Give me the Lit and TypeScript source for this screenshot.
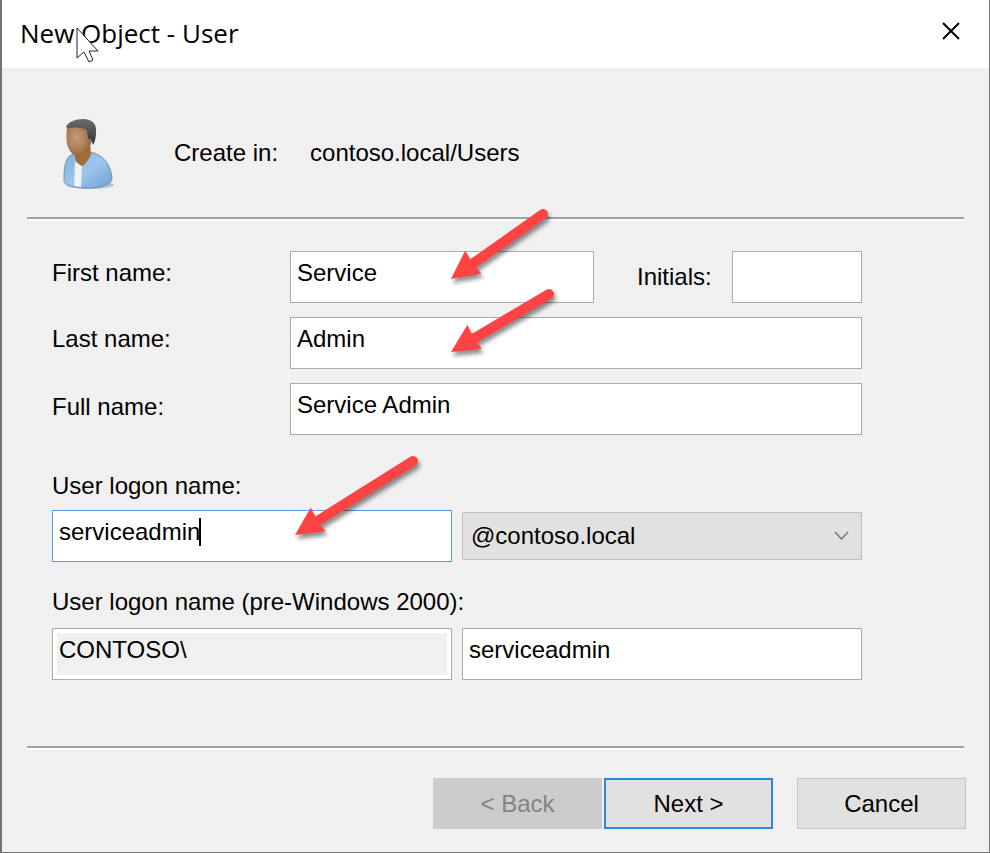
import { LitElement, html, css, svg } from "lit";
import { customElement, property } from "lit/decorators.js";

/** Red pointer with a round tail, drawn from tail to tip. */
@customElement("callout-arrow")
class CalloutArrow extends LitElement {
  @property({ type: Number }) dx = 92;
  @property({ type: Number }) dy = 66;

  static styles = css`
    :host {
      display: block;
      pointer-events: none;
    }
    .arrow {
      display: block;
      overflow: visible;
      filter: drop-shadow(2px 4px 2px rgba(0, 0, 0, 0.45));
    }
  `;

  render() {
    const { dx, dy } = this;
    const len = Math.hypot(dx, dy);
    const angle = (Math.atan2(-dy, dx) * 180) / Math.PI;
    return html`<svg class="arrow" width="1" height="1" aria-hidden="true">
      ${svg`<g transform="rotate(${angle})" fill="#ff4343">
        <path d="M0 0 L28 -15 L27 -5 H${len} A5 5 0 0 1 ${len} 5 H27 L28 13 Z" />
      </g>`}
    </svg>`;
  }
}

@customElement("app-root")
class AppRoot extends LitElement {
  static styles = css`
    :host {
      display: block;
      font-family: "Liberation Sans", Arial, sans-serif;
      font-size: 24px;
      line-height: 28px;
      color: #000;
    }
    * {
      box-sizing: border-box;
    }
    .dialog {
      min-height: 100vh;
      display: flex;
      flex-direction: column;
      background: #f0f0f0;
      border: solid #757575;
      border-width: 0 1px 1px 2px;
    }
    .titlebar {
      position: relative;
      display: flex;
      align-items: center;
      justify-content: space-between;
      height: 68px;
      padding: 0 18px;
      background: #fff;
    }
    .title {
      margin: 0 0 2px;
      font: 400 26px/34px "Open Sans", "Segoe UI", sans-serif;
    }
    .close {
      display: grid;
      place-items: center;
      width: 40px;
      height: 40px;
      margin: 0 0 6px;
      padding: 0;
      border: 0;
      background: none;
    }
    .pointer {
      position: absolute;
      left: 74px;
      top: 27px;
    }
    .location {
      display: flex;
      align-items: center;
      height: 149px;
      padding: 22px 60px 0;
    }
    .location p {
      display: flex;
      gap: 32px;
      margin: 0 0 2px 58px;
    }
    .rule {
      height: 4px;
      margin: 0 25px;
      border: 0;
      border-top: 2px solid #a0a0a0;
      border-bottom: 2px solid #fff;
    }
    .form {
      padding: 30px 127px 66px 50px;
    }
    .names {
      display: grid;
      gap: 14px;
    }
    .row {
      display: flex;
      align-items: center;
    }
    .label {
      flex: none;
      width: 238px;
      padding-bottom: 8px;
    }
    .label.full {
      padding-bottom: 4px;
    }
    .initials-label {
      flex: none;
      width: 138px;
      padding-left: 43px;
    }
    .field {
      position: relative;
      flex: 1;
      min-width: 0;
    }
    .field.initials {
      flex: 0 0 130px;
    }
    .input {
      display: block;
      width: 100%;
      height: 52px;
      margin: 0;
      padding: 0 6px 8px;
      border: 1px solid #ababab;
      border-radius: 0;
      outline: 0;
      background: #fff;
      font: inherit;
      color: inherit;
    }
    .input.active {
      border-color: #569de5;
    }
    .input.locked {
      background: #f0f0f0;
      box-shadow: inset 0 0 0 4px #fff;
    }
    .caret {
      position: absolute;
      left: 147px;
      top: 8px;
      width: 2px;
      height: 28px;
      background: #000;
    }
    .to-name,
    .to-last,
    .to-logon {
      position: absolute;
      z-index: 1;
    }
    .to-name {
      left: 161px;
      top: 28px;
    }
    .to-last {
      left: 161px;
      top: 35px;
    }
    .to-logon {
      left: 243px;
      top: 25px;
    }
    .group-label {
      display: block;
      width: fit-content;
      margin: 37px 0 10px;
    }
    .group-label.legacy {
      margin: 26px 0 12px;
    }
    .pair {
      display: flex;
      align-items: center;
      gap: 10px;
    }
    .select {
      display: block;
      width: 100%;
      height: 48px;
      margin: 0;
      padding: 0 40px 0 8px;
      appearance: none;
      border: 1px solid #bfbfbf;
      border-radius: 0;
      background: #e1e1e1;
      font: inherit;
      color: inherit;
    }
    .chevron {
      position: absolute;
      right: 13px;
      top: 19px;
      pointer-events: none;
    }
    .actions {
      display: flex;
      justify-content: flex-end;
      gap: 2px;
      padding: 28px 23px 23px;
    }
    .button {
      width: 169px;
      height: 51px;
      padding: 0;
      border: 1px solid #c3c3c3;
      border-radius: 0;
      background: #e1e1e1;
      font: inherit;
      color: #000;
    }
    .button:disabled {
      border-color: #cccccc;
      background: #cccccc;
      color: #838383;
    }
    .button.primary {
      border: 2px solid #2b88dc;
    }
    .button.cancel {
      margin-left: 22px;
    }
  `;

  private userIcon() {
    return html`<svg width="54" height="74" viewBox="0 0 54 74" aria-hidden="true">
      <defs>
        <linearGradient id="shirt" x1="0" y1="0" x2="1" y2="1">
          <stop offset="0" stop-color="#7fadd8" />
          <stop offset="0.5" stop-color="#9cc6ee" />
          <stop offset="1" stop-color="#6f9fce" />
        </linearGradient>
        <radialGradient id="skin" cx="0.4" cy="0.45" r="0.65">
          <stop offset="0" stop-color="#c49d79" />
          <stop offset="0.6" stop-color="#aa7d56" />
          <stop offset="1" stop-color="#8c5c30" />
        </radialGradient>
        <linearGradient id="hair" x1="0" y1="0" x2="0" y2="1">
          <stop offset="0" stop-color="#6b6b6b" />
          <stop offset="1" stop-color="#333" />
        </linearGradient>
      </defs>
      <ellipse cx="28" cy="68" rx="24" ry="4" fill="#8b9299" opacity="0.5" />
      <path d="M2 60C2 49 4 41 9 38L15 36L28 35C42 38 48 47 50 60C51 68 39 71 26 71C12 71 2 68 2 64Z" fill="url(#shirt)" stroke="#6b94bd" />
      <path d="M13 45L20 48L19 70L12 69Z" fill="#f1f3f6" />
      <path d="M13 36L28 26L29 37C27 43 23 47 20 49C16 47 13 44 13 40Z" fill="#a26c36" />
      <path d="M5 10C4 19 4 27 7 32C9 37 14 40 19 38C25 35 29 30 30 22L28 8L10 6Z" fill="url(#skin)" />
      <path d="M4 10C6 5 13 2 21 2C30 2 35 7 34 15C34 20 33 25 31 28L29 22L26 22L25 13C20 10 12 10 6 11Z" fill="url(#hair)" />
    </svg>`;
  }

  render() {
    return html`<main class="dialog">
      <header class="titlebar">
        <h1 class="title">New Object - User</h1>
        <button class="close" type="button" aria-label="Close">
          <svg width="18" height="18" viewBox="0 0 18 18" aria-hidden="true">
            <path d="M1 1L17 17M17 1L1 17" stroke="#000" stroke-width="2" fill="none" />
          </svg>
        </button>
        <svg class="pointer" width="25" height="37" viewBox="0 0 25 37" aria-hidden="true">
          <path d="M1 1V31L8 25L13 35L17 33L13 24H22Z" fill="#fff" stroke="#222" />
        </svg>
      </header>

      <section class="location">
        ${this.userIcon()}
        <p><span>Create in:</span><span>contoso.local/Users</span></p>
      </section>
      <hr class="rule" />

      <form class="form">
        <div class="names">
          <div class="row">
            <label class="label" for="first">First name:</label>
            <div class="field">
              <input class="input" id="first" type="text" .value=${"Service"} />
              <callout-arrow class="to-name" dx="92" dy="65"></callout-arrow>
            </div>
            <label class="initials-label" for="initials">Initials:</label>
            <div class="field initials">
              <input class="input" id="initials" type="text" />
            </div>
          </div>
          <div class="row">
            <label class="label" for="last">Last name:</label>
            <div class="field">
              <input class="input" id="last" type="text" .value=${"Admin"} />
              <callout-arrow class="to-last" dx="98" dy="58"></callout-arrow>
            </div>
          </div>
          <div class="row">
            <label class="label full" for="full">Full name:</label>
            <div class="field">
              <input class="input" id="full" type="text" .value=${"Service Admin"} />
            </div>
          </div>
        </div>

        <label class="group-label" for="logon">User logon name:</label>
        <div class="pair">
          <div class="field">
            <input class="input active" id="logon" type="text" .value=${"serviceadmin"} />
            <span class="caret"></span>
            <callout-arrow class="to-logon" dx="118" dy="74"></callout-arrow>
          </div>
          <div class="field">
            <select class="select" aria-label="Domain suffix">
              <option>@contoso.local</option>
            </select>
            <svg class="chevron" width="15" height="10" viewBox="0 0 15 10" aria-hidden="true">
              <path d="M1 1L7.500 8L14 1" fill="none" stroke="#6e6e6e" stroke-width="1.300" />
            </svg>
          </div>
        </div>

        <label class="group-label legacy" for="legacy">User logon name (pre-Windows 2000):</label>
        <div class="pair">
          <div class="field">
            <input class="input locked" type="text" readonly aria-label="Domain" .value=${"CONTOSO\\"} />
          </div>
          <div class="field">
            <input class="input" id="legacy" type="text" .value=${"serviceadmin"} />
          </div>
        </div>
      </form>

      <hr class="rule" />
      <footer class="actions">
        <button class="button" type="button" disabled>&lt; Back</button>
        <button class="button primary" type="button">Next &gt;</button>
        <button class="button cancel" type="button">Cancel</button>
      </footer>
    </main>`;
  }
}
